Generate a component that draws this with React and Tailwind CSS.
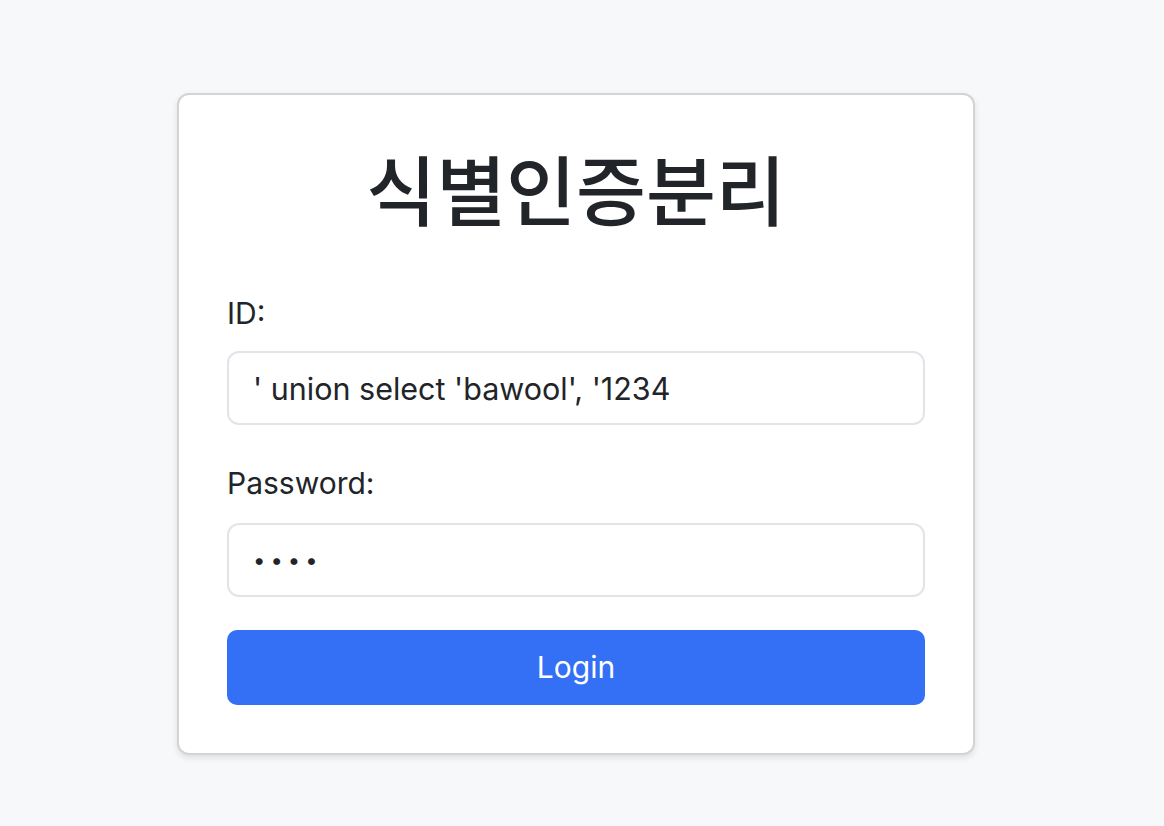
import React from "react";

export default function App() {
  return (
    <div className="min-h-[826px] bg-[#f7f8fa] pt-[93px] font-['Inter','Noto_Sans_CJK_KR',sans-serif] text-[#212529]">
      <div className="ml-[177px] w-[798px] rounded-[12px] border-2 border-[#d4d4d4] bg-white p-[48px] shadow-[0_3px_6px_rgba(0,0,0,0.1)]">
        <h1 className="text-center font-['Noto_Sans_CJK_KR','Inter',sans-serif] text-[76px] font-medium leading-[89px]">
          식별인증분리
        </h1>

        <form className="mt-[57px] flex flex-col" onSubmit={(e) => e.preventDefault()}>
          <label htmlFor="uid" className="text-[30px] leading-[48px]">ID:</label>
          <input
            id="uid"
            type="text"
            defaultValue="' union select 'bawool', '1234"
            className="mt-[14px] h-[74px] w-full rounded-[12px] border-2 border-[#e1e4e8] bg-white px-[24px] text-[30.5px] text-[#212529] outline-none"
          />

          <label htmlFor="pw" className="mt-[34px] text-[30px] leading-[48px]">Password:</label>
          <input
            id="pw"
            type="password"
            defaultValue="1234"
            className="mt-[16px] h-[74px] w-full rounded-[12px] border-2 border-[#e1e4e8] bg-white px-[24px] text-[22px] tracking-[5px] text-[#212529] outline-none"
          />

          <button
            type="submit"
            className="mt-[33px] h-[75px] w-full rounded-[10px] bg-[#3370f5] text-[30px] text-white"
          >
            Login
          </button>
        </form>
      </div>
    </div>
  );
}
